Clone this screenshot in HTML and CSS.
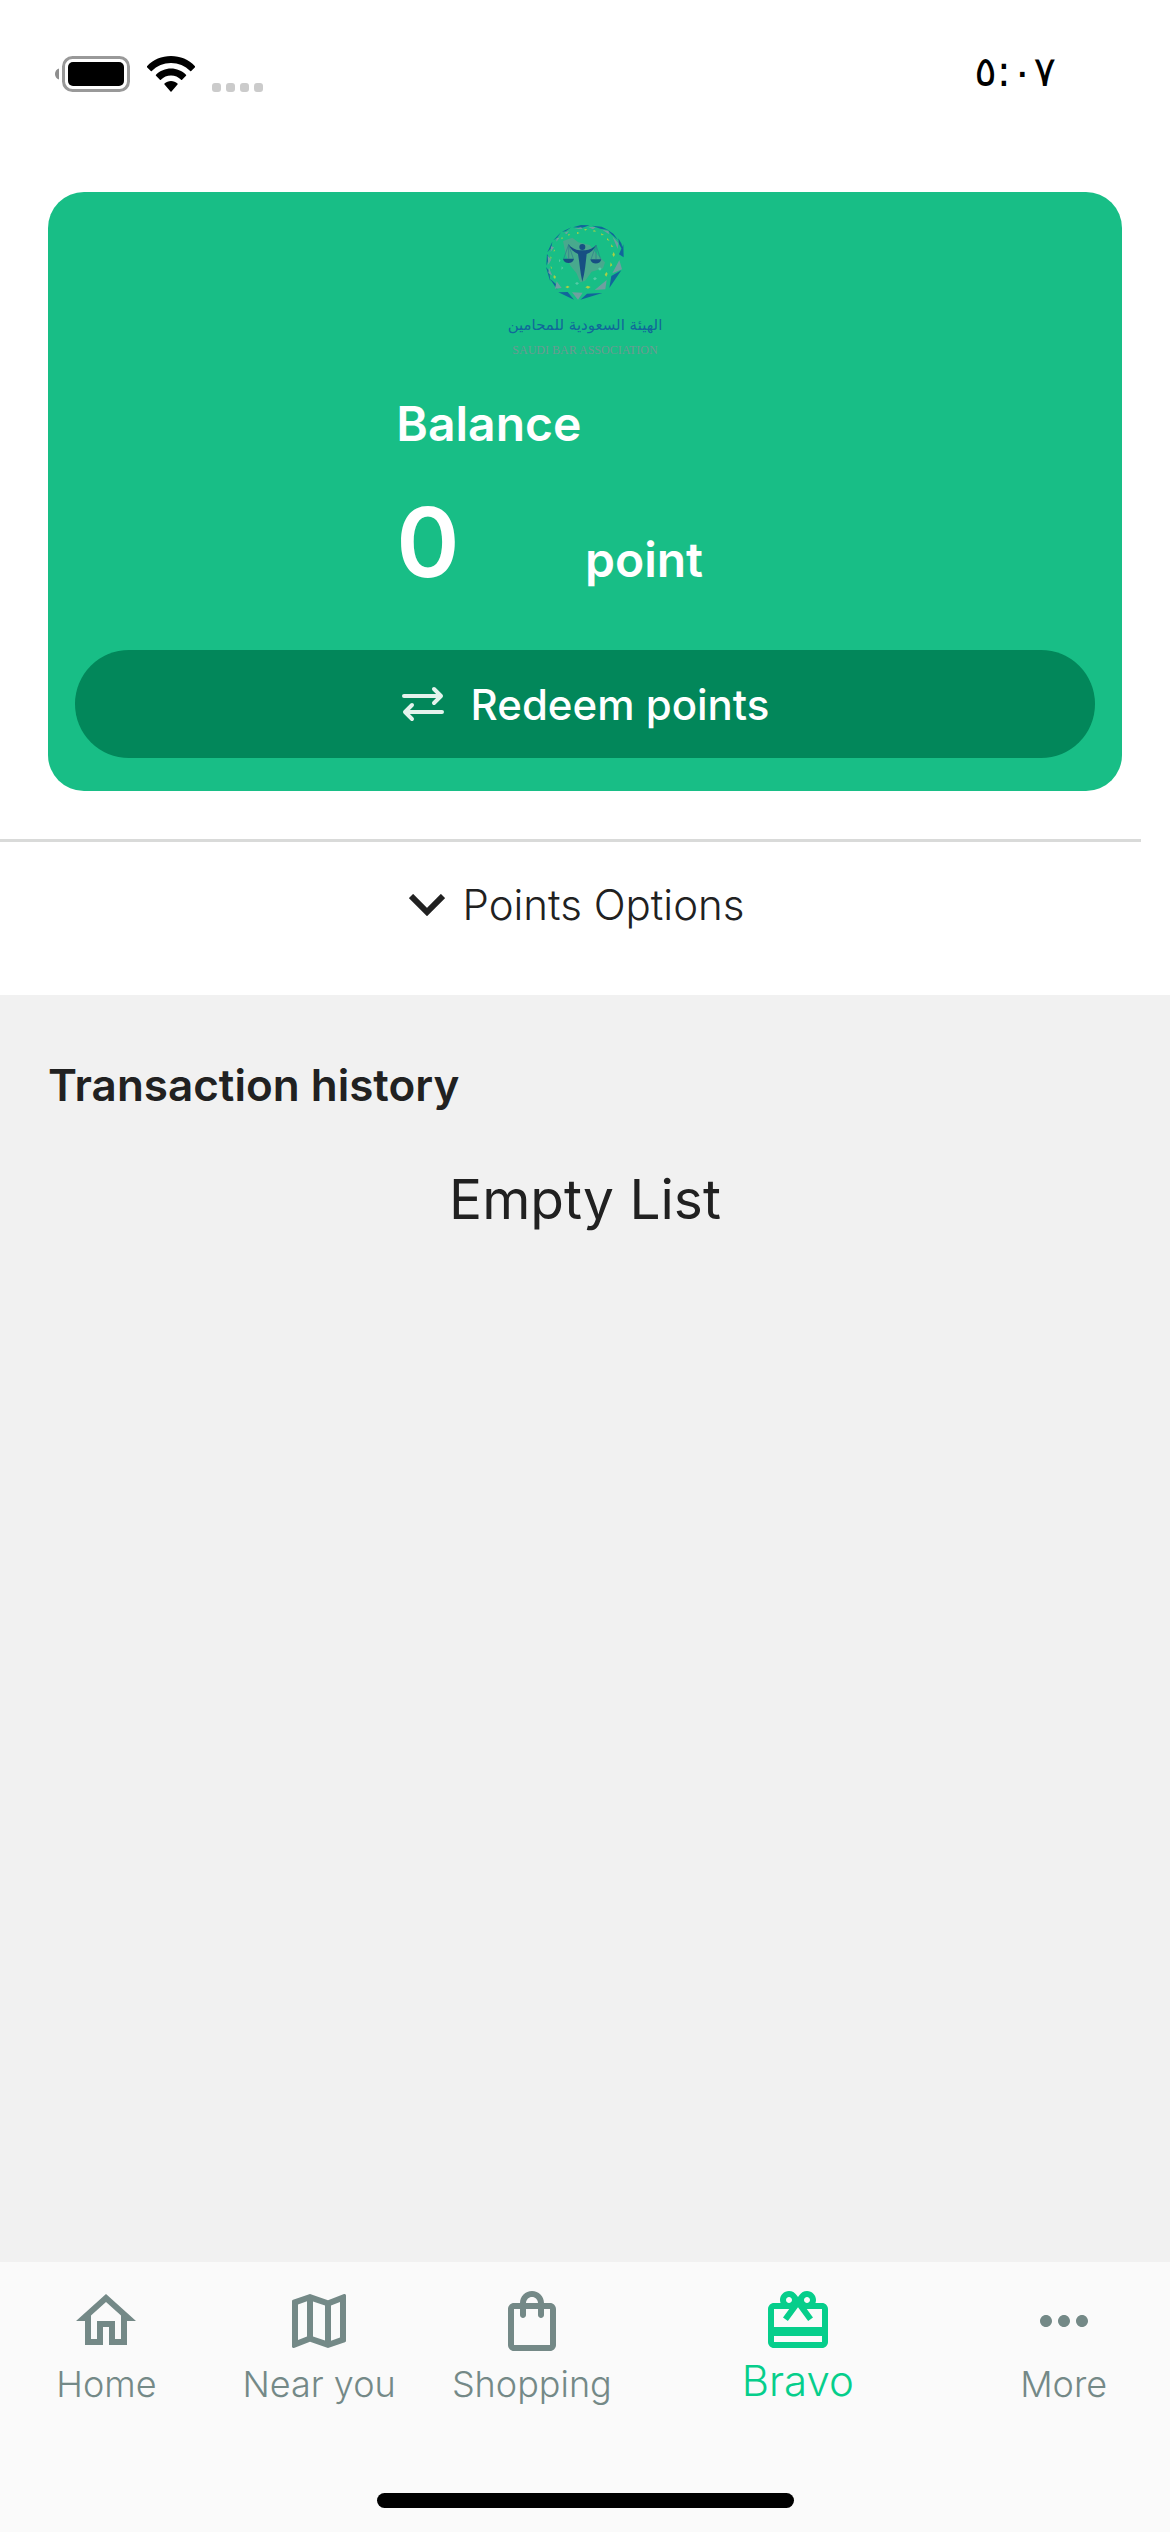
FILE: index.html
```html
<!DOCTYPE html>
<html lang="en">
<head>
<meta charset="utf-8">
<meta name="viewport" content="width=device-width, initial-scale=1">
<title>Bravo</title>
<link rel="stylesheet" href="styles.css">
</head>
<body>
<header class="status">
  <div class="status-icons">
    <svg class="battery" viewBox="0 0 75 36" aria-hidden="true">
      <path d="M4 12.500v11C1.500 23 0 20.500 0 18s1.500-5 4-5.500z" fill="#8e8e8e"/>
      <rect x="8.500" y="1.500" width="65" height="33" rx="9" fill="none" stroke="#999" stroke-width="3"/>
      <rect x="13" y="6" width="56" height="24" rx="5"/>
    </svg>
    <svg class="wifi" viewBox="0 0 48 36" aria-hidden="true">
      <path d="M24 0C14.700 0 6.300 3.500 0 10.200q-.4.500 0 1L3.800 15q.5.500 1 0C10 9.800 16.600 7 24 7s14 2.800 19.200 8q.5.500 1 0L48 11.200q.4-.5 0-1C41.700 3.500 33.300 0 24 0z"/>
      <path d="M24 12.500c-5.700 0-11 2.300-15 6.200q-.5.500 0 1l3.900 4q.5.500 1 0c2.700-2.700 6.200-4.200 10.100-4.200s7.400 1.500 10.100 4.200q.5.500 1 0l3.900-4q.5-.5 0-1c-4-3.900-9.300-6.200-15-6.200z"/>
      <path d="M24 25c-2.500 0-4.700.9-6.500 2.500q-.5.500 0 1l6 7q.5.500 1 0l6-7q.5-.5 0-1C28.700 25.900 26.500 25 24 25z"/>
    </svg>
    <svg class="signal" viewBox="0 0 51 9" fill="#cbcbcb" aria-hidden="true">
      <rect width="9" height="9" rx="3"/><rect x="14" width="9" height="9" rx="3"/><rect x="28" width="9" height="9" rx="3"/><rect x="42" width="9" height="9" rx="3"/>
    </svg>
  </div>
  <time class="clock" lang="ar">٥:٠٧</time>
</header>

<main class="content">
  <section class="card">
    <div class="brand">
      <svg class="emblem" viewBox="168 57 240 231" aria-hidden="true">
        <path d="M222 108l28-10 18 14 34 8 24 30 22 22-6 18-34 10-20 28-14 4-12-28-18-22-14-34z" fill="#48a98d"/>
        <g fill="#11659b">
          <path d="M252 67l24-7 26 1-22 7zM309 62l29 3 20 10-24-4zM355 74l18 12 14 19-20-17zM388 100l10 17 3 20-11-20zM403 118l1 39-14-9zM397 196l-36 53 6-36zM340 264l-66 20 20-18zM255 284l-47-22 28-1zM205 255l-22-34 17 15zM184 230l-13-44 10 13zM172 182l2-36 6 14zM175 142l15-32-3 19zM193 106l23-24-12 17zM219 80l28-13-17 12z"/>
        </g>
        <g fill="#6f9fa0">
          <path d="M256 72l20-5 5 5zM298 66h22l-8 7zM340 74l19 5 1 9zM370 94l18 21-2 17zM391 165l8 28-29 12zM353 225l-4 28-32 2zM281 263l-14 21-18-22zM203 229l15 20-20 2zM180 188l10 24-12-8zM176 152l11 12-9 15zM186 124l9 3-10 14zM203 99l9-1-10 12zM226 83l14-5-7 10z"/>
        </g>
        <g fill="#a9cf45">
          <path d="M264 81l8 3-8 3zM286 72l9 1-7 4zM314 75l8 4-9 1zM336 85l9 5-8 1zM354 99l8 8-8-2zM367 118l6 8-7-1zM374 141l4 8-4 7-4-7zM365 172l5 9-7 4zM352 201l4 5-4 9-5-6zM296 242l9 4-8 5-8-4zM236 242l6 4-7 4-6-4zM195 210l6 5-3 7-5-5zM185 182l4 7-3 3zM184 154l4 4-3 5zM195 133l3 4-4 3zM218 97l5 2-6 4zM238 87l6 2-6 3z"/>
        </g>
        <path d="M264 231l6 4-6 5-6-5zM318 216l6 5-7 5-5-5zM333 187l5 4-5 6-6-6zM218 184l5 5-6 5zM210 162l5 5-5 5z" fill="#55cba5"/>
        <g fill="#174f83">
          <circle cx="280" cy="126" r="9"/>
          <path d="M237 117c12 12 22 18 34 19h18c12-1 23-7 34-17-8 15-18 23-30 28-3 27-5 55-13 83-7-28-8-57-13-83-13-6-23-15-30-30z"/>
          <path d="M222 161h33c-2 17-31 17-33 0zM304 163h33c-2 17-31 17-33 0z"/>
        </g>
        <path d="M239 119l-15 42M239 119v42M239 119l14 42M321 121l-15 42M321 121v42M321 121l14 42" fill="none" stroke="#2f7a8c" stroke-width="2"/>
      </svg>
      <p class="brand-ar" lang="ar" dir="rtl">الهيئة السعودية للمحامين</p>
      <p class="brand-en">SAUDI BAR ASSOCIATION</p>
    </div>
    <div class="balance">
      <h1 class="balance-title">Balance</h1>
      <strong class="balance-value">0</strong>
      <span class="balance-unit">point</span>
    </div>
    <button class="redeem" type="button">
      <svg class="swap" viewBox="0 0 44 36" fill="none" stroke="#e4f3ed" stroke-width="4" stroke-linecap="round" stroke-linejoin="round" aria-hidden="true">
        <path d="M3 10h36M33 3l7 7-7 7M41 26H5M11 19l-7 7 7 7"/>
      </svg>
      Redeem points
    </button>
  </section>

  <button class="options" type="button">
    <svg class="chevron" viewBox="0 0 36 22" aria-hidden="true"><path d="M2 2l16 16L34 2" fill="none" stroke="#212121" stroke-width="6"/></svg>
    Points Options
  </button>

  <section class="history">
    <h2 class="history-title">Transaction history</h2>
    <p class="history-empty">Empty List</p>
  </section>
</main>

<footer class="footer">
  <nav class="tabs">
    <a class="tab" href="#home">
      <svg viewBox="0 0 24 24" aria-hidden="true"><path d="M12 5.690l5 4.500V18h-2v-6H9v6H7v-7.810l5-4.500M12 3L2 12h3v8h6v-6h2v6h6v-8h3L12 3z"/></svg>
      Home
    </a>
    <a class="tab" href="#near">
      <svg viewBox="0 0 24 24" aria-hidden="true"><path d="M20.500 3l-.16.030L15 5.100 9 3 3.360 4.900c-.21.070-.36.250-.36.480V20.500c0 .28.220.5.500.5l.16-.03L9 18.900l6 2.100 5.640-1.900c.21-.07.360-.25.360-.48V3.500c0-.28-.22-.5-.5-.5zM10 5.470l4 1.400v11.660l-4-1.400V5.470zm-5 .99l3-1.010v11.700l-3 1.160V6.460zm14 11.080l-3 1.010V6.860l3-1.160v11.840z"/></svg>
      Near you
    </a>
    <a class="tab" href="#shopping">
      <svg viewBox="0 0 24 24" aria-hidden="true"><path d="M18 6h-2c0-2.210-1.790-4-4-4S8 3.790 8 6H6c-1.100 0-2 .9-2 2v12c0 1.100.9 2 2 2h12c1.100 0 2-.9 2-2V8c0-1.100-.9-2-2-2zm-6-2c1.100 0 2 .9 2 2h-4c0-1.100.9-2 2-2zm6 16H6V8h2v2c0 .55.450 1 1 1s1-.45 1-1V8h4v2c0 .55.450 1 1 1s1-.45 1-1V8h2v12z"/></svg>
      Shopping
    </a>
    <a class="tab tab-active" href="#bravo" aria-current="page">
      <svg viewBox="0 0 24 24" aria-hidden="true"><path d="M20 6h-2.180c.11-.31.180-.65.180-1 0-1.660-1.340-3-3-3-1.050 0-1.960.54-2.500 1.350l-.5.670-.5-.68C10.960 2.540 10.050 2 9 2 7.340 2 6 3.340 6 5c0 .35.070.69.180 1H4c-1.110 0-1.990.89-1.990 2L2 19c0 1.110.89 2 2 2h16c1.110 0 2-.89 2-2V8c0-1.110-.89-2-2-2zm-5-2c.55 0 1 .45 1 1s-.45 1-1 1-1-.45-1-1 .45-1 1-1zM9 4c.55 0 1 .45 1 1s-.45 1-1 1-1-.45-1-1 .45-1 1-1zm11 15H4v-2h16v2zm0-5H4V8h5.080L7 10.830 8.620 12 12 7.400l3.380 4.600L17 10.830 14.920 8H20v6z"/></svg>
      Bravo
    </a>
    <a class="tab" href="#more">
      <svg viewBox="0 0 24 24" aria-hidden="true"><path d="M6 10c-1.100 0-2 .9-2 2s.9 2 2 2 2-.9 2-2-.9-2-2-2zm12 0c-1.100 0-2 .9-2 2s.9 2 2 2 2-.9 2-2-.9-2-2-2zm-6 0c-1.100 0-2 .9-2 2s.9 2 2 2 2-.9 2-2-.9-2-2-2z"/></svg>
      More
    </a>
  </nav>
  <div class="home-bar"></div>
</footer>
</body>
</html>
```
FILE: styles.css
```css
* {
  box-sizing: border-box;
}

body {
  margin: 0;
  min-height: 100vh;
  display: flex;
  flex-direction: column;
  background: #fff;
  color: #212121;
  font-family: Inter, "Liberation Sans", sans-serif;
}

h1, h2, p {
  margin: 0;
}

button {
  border: 0;
  font-family: inherit;
  color: inherit;
  cursor: pointer;
}

.status {
  display: flex;
  justify-content: space-between;
  align-items: flex-start;
  padding: 48px 114px 0 55px;
  height: 192px;
  color: #000;
}

.status-icons {
  display: flex;
  align-items: flex-end;
  gap: 17px;
  padding-top: 8px;
}

.battery {
  width: 75px;
  height: 36px;
}

.wifi {
  width: 48px;
  height: 36px;
}

.signal {
  width: 51px;
  height: 9px;
}

.clock {
  font-family: "DejaVu Sans", sans-serif;
  font-size: 42px;
  line-height: 48px;
}

.content {
  flex: 1;
  display: flex;
  flex-direction: column;
}

.card {
  display: flex;
  flex-direction: column;
  align-items: center;
  margin: 0 48px;
  padding: 32px 27px 33px;
  border-radius: 36px;
  background: #18be86;
  color: #fff;
}

.brand {
  display: flex;
  flex-direction: column;
  align-items: center;
}

.emblem {
  width: 80px;
  height: 77px;
}

.brand-ar {
  margin-top: 6px;
  color: #10689a;
  font-family: "DejaVu Sans", sans-serif;
  font-size: 15px;
  line-height: 36px;
}

.brand-en {
  color: #6c9a92;
  font-family: "Liberation Serif", serif;
  font-size: 12px;
  line-height: 15px;
}

.balance {
  display: grid;
  grid-template-columns: 1fr 1fr;
  align-items: baseline;
  width: 37%;
  margin-top: 36px;
  row-gap: 28px;
}

.balance-title {
  grid-column: 1 / -1;
  font-size: 48px;
  font-weight: 600;
  line-height: 60px;
}

.balance-value {
  font-size: 96px;
  font-weight: 600;
  line-height: 120px;
}

.balance-unit {
  font-size: 48px;
  font-weight: 600;
  line-height: 60px;
}

.redeem {
  display: flex;
  align-items: center;
  justify-content: center;
  gap: 26px;
  width: 100%;
  height: 108px;
  margin-top: 48px;
  border-radius: 54px;
  background: #02875a;
  color: #fff;
  font-size: 42px;
  font-weight: 500;
}

.swap {
  width: 44px;
  height: 36px;
}

.options {
  display: flex;
  align-items: center;
  justify-content: center;
  gap: 18px;
  margin: 48px 29px 0 0;
  padding: 36px 0 63px 12px;
  border-top: 3px solid #d9dad9;
  background: transparent;
  font-size: 42px;
  font-weight: 300;
  line-height: 54px;
}

.chevron {
  width: 36px;
  height: 22px;
}

.history {
  flex: 1;
  padding: 60px 48px;
  background: #f1f1f1;
}

.history-title {
  font-size: 44px;
  font-weight: 600;
  line-height: 60px;
}

.history-empty {
  margin-top: 48px;
  font-size: 55px;
  line-height: 72px;
  text-align: center;
}

.footer {
  display: flex;
  flex-direction: column;
  align-items: center;
  padding-bottom: 24px;
  background: #fafafa;
}

.tabs {
  display: flex;
  width: 100%;
  padding-top: 23px;
}

.tab {
  flex: 2;
  display: flex;
  flex-direction: column;
  align-items: center;
  gap: 3px;
  color: #748987;
  font-size: 36px;
  font-weight: 300;
  line-height: 48px;
  text-decoration: none;
}

.tab svg {
  width: 72px;
  height: 72px;
  fill: currentColor;
}

.tab-active {
  flex: 3;
  gap: 0;
  color: #06ce8b;
  font-size: 42px;
}

.home-bar {
  width: 417px;
  height: 15px;
  margin-top: 85px;
  border-radius: 8px;
  background: #000;
}
```
